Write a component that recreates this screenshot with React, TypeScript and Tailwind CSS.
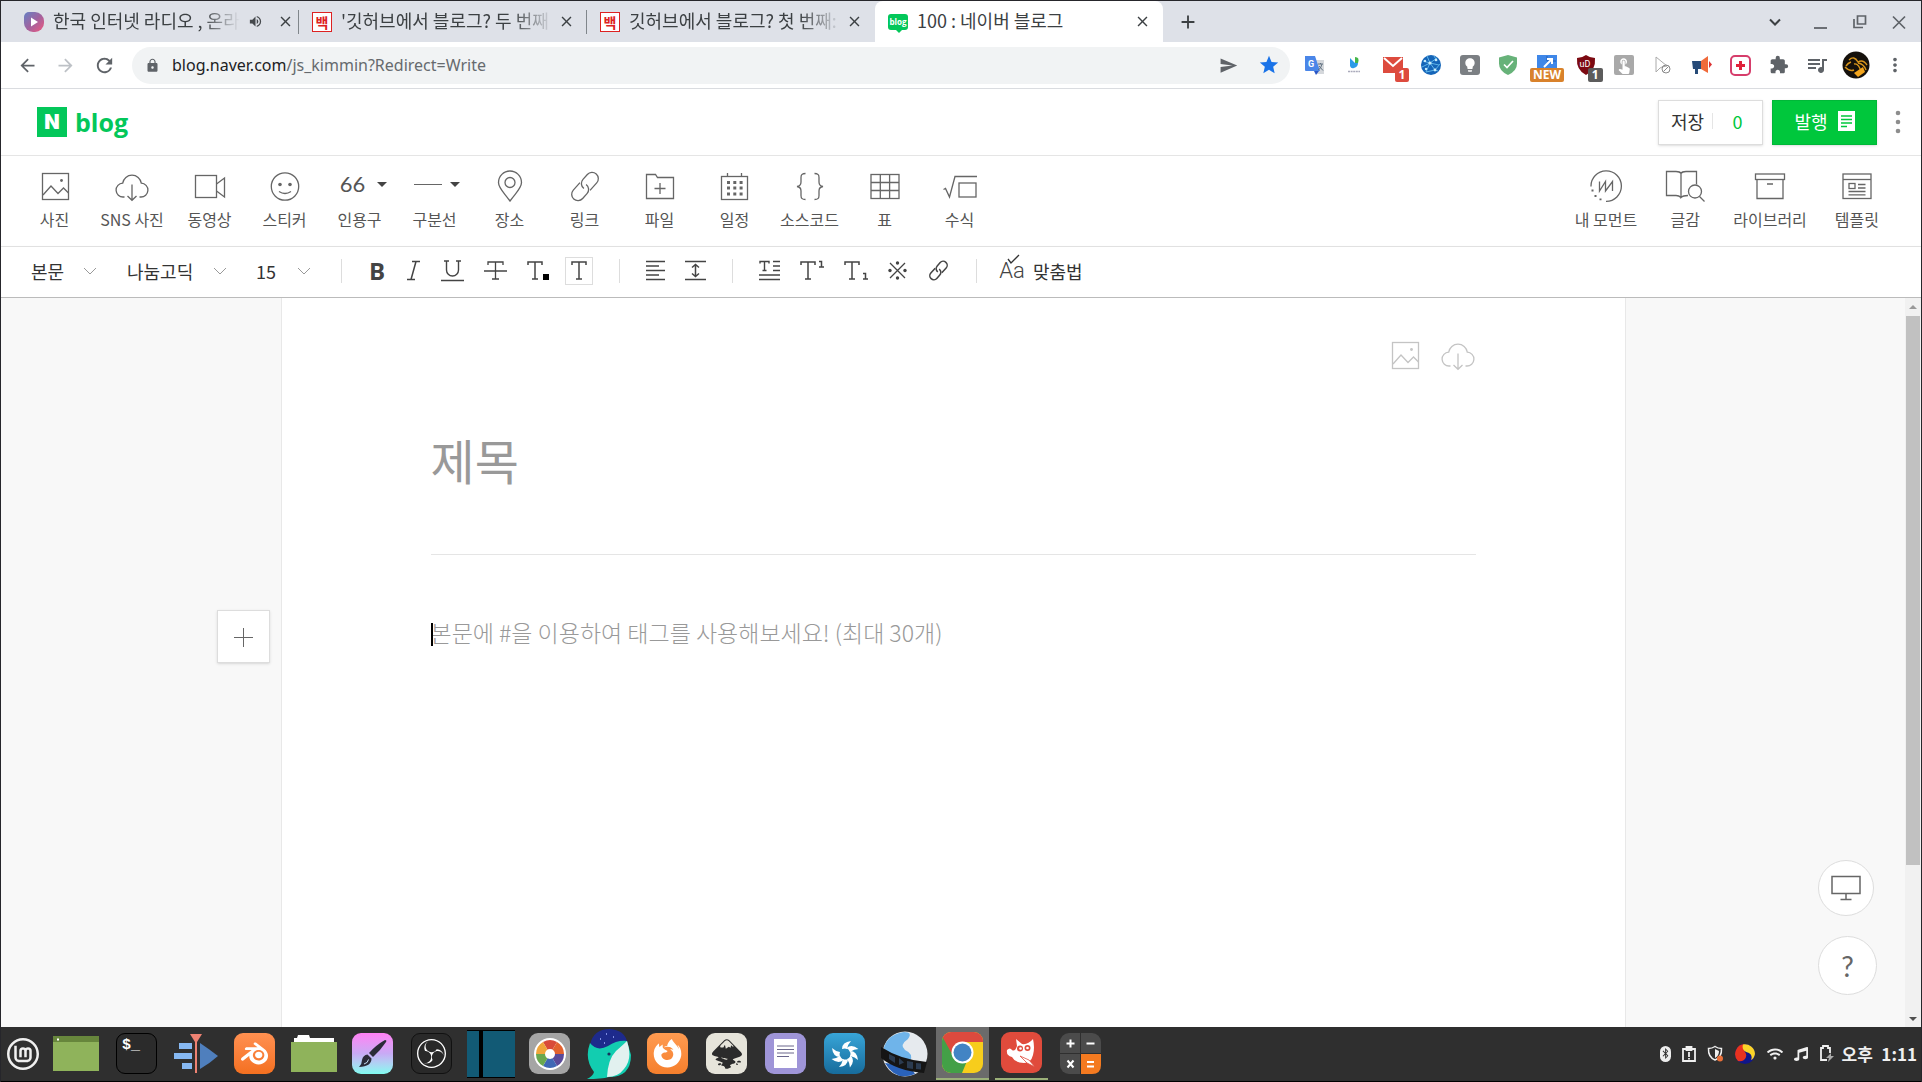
import type { ReactNode } from 'react'
import {
  MdArrowBack, MdArrowForward, MdRefresh, MdLock, MdSend, MdStar, MdExtension,
  MdQueueMusic, MdVolumeUp, MdMoreVert, MdClose, MdAdd, MdLightbulb, MdTouchApp,
} from 'react-icons/md'
import { SiLinuxmint, SiBlender, SiObsstudio, SiInkscape } from 'react-icons/si'
import { FaFirefoxBrowser, FaBluetoothB, FaWifi, FaMusic } from 'react-icons/fa'

// ─── Shared line icon wrapper (36×32 box for the big toolbar)
function Line({ children, w = 36, h = 32, className = '' }: { children: ReactNode; w?: number; h?: number; className?: string }) {
  return (
    <svg width={w} height={h} viewBox={`0 0 ${w} ${h}`} fill="none" stroke="currentColor" strokeWidth="1.3" className={`shrink-0 ${className}`} aria-hidden="true">
      {children}
    </svg>
  )
}

const PhotoIcon = () => (
  <Line>
    <rect x="5.5" y="3.5" width="26" height="26" />
    <path d="M6 25l8-9 7 7.5 5.5-5.5 5 5" />
    <circle cx="24.5" cy="10.5" r="1.4" fill="currentColor" stroke="none" />
  </Line>
)

const CloudIcon = () => (
  <Line>
    <path d="M10.5 27H9.3A6.9 6.9 0 0 1 8.7 13.2A9.4 9.4 0 0 1 27.3 13.2A6.9 6.9 0 0 1 26.7 27H25.5" />
    <path d="M18 14.5V30M13.5 26l4.5 4.3L22.5 26" />
  </Line>
)

const Caret = () => <span className="border-x-[5px] border-t-[5px] border-x-transparent border-t-[#444]" />

type Tool = { label: string; icon: ReactNode; wide?: boolean }

const TOOLS: Tool[] = [
  { label: '사진', icon: <PhotoIcon /> },
  { label: 'SNS 사진', icon: <CloudIcon />, wide: true },
  { label: '동영상', icon: <Line><rect x="3.5" y="5.5" width="21" height="22" /><path d="M24.5 14l8-6v19l-8-6" /></Line> },
  {
    label: '스티커',
    icon: (
      <Line>
        <circle cx="18" cy="16.5" r="13.7" />
        <circle cx="13" cy="14.5" r="1.8" fill="currentColor" stroke="none" />
        <circle cx="23" cy="14.5" r="1.8" fill="currentColor" stroke="none" />
        <path d="M12 21.5q6 4 12 0" />
      </Line>
    ),
  },
  { label: '인용구', icon: <span className="flex h-8 items-center gap-3 pb-1 pl-2"><span className="font-['Lato',sans-serif] text-[22px] leading-7 text-[#555]">66</span><Caret /></span> },
  { label: '구분선', icon: <span className="flex h-8 items-center gap-2 pb-1 pl-1"><span className="w-7 border-t border-[#666]" /><Caret /></span> },
  { label: '장소', icon: <Line><path d="M18 31C11 21.5 6.5 18 6.5 12.5a11.5 11.5 0 0 1 23 0C29.5 18 25 21.5 18 31z" /><circle cx="18" cy="12.5" r="5" /></Line> },
  {
    label: '링크',
    icon: (
      <Line>
        <g transform="rotate(-48 18 16.5)">
          <path d="M17.5 10.2H7.5a6.3 6.3 0 0 0 0 12.6h6.5a6.2 6.2 0 0 0 6.2-6.8" />
          <path d="M18.5 22.800H28.500a6.300 6.300 0 0 0 0-12.600h-6.500a6.200 6.200 0 0 0-6.200 6.800" />
        </g>
      </Line>
    ),
  },
  { label: '파일', icon: <Line><path d="M4.5 28.500v-24h9l2 3h16v21z" /><path d="M12.500 18.500h11M18 13v11" /></Line> },
  {
    label: '일정',
    icon: (
      <Line>
        <rect x="4.5" y="6.5" width="26" height="23" />
        <path d="M10.5 3v3.5M24.5 3v3.5" />
        <path d="M10 12.5h16M10 18h16M10 24h16" strokeWidth="3" strokeDasharray="3 3.300" />
      </Line>
    ),
  },
  {
    label: '소스코드',
    icon: (
      <Line>
        <path d="M13.5 3.500c-4 0-4.500 1.500-4.500 4v4.500q0 4-4 4.500q4 .5 4 4.500v4.500c0 2.500 .5 4 4.500 4" />
        <path d="M22.5 3.500c4 0 4.500 1.500 4.500 4v4.500q0 4 4 4.500q-4 .5-4 4.500v4.500c0 2.500-.5 4-4.500 4" />
      </Line>
    ),
  },
  { label: '표', icon: <Line><rect x="4" y="4.5" width="28" height="24" /><path d="M4 12.5h28M4 20.5h28M13.3 4.500v24M22.600 4.500v24" /></Line> },
  { label: '수식', icon: <Line><path d="M1.5 19.500l2-1 4 8.500 5.500-20.500h22" /><rect x="17" y="13" width="17" height="14" /></Line> },
]

const RIGHT_TOOLS: Tool[] = [
  {
    label: '내 모먼트',
    icon: (
      <Line>
        <path d="M3 16.5A15.2 15.2 0 1 1 18 31.3" />
        <path d="M11.5 11.500v9.500l6-9.500v9.500l7-9.500v9.500" />
        <path d="M3.5 20.500h2M6.500 26h2M11.500 29.300h2" strokeWidth="1.8" />
      </Line>
    ),
  },
  {
    label: '글감',
    icon: (
      <Line w={40}>
        <path d="M16 27.5q-2-2-5-2H1.500v-24H11q4 0 5 2q1-2 5-2h10.500v13M16 3.500v24q2-2 7-2" />
        <circle cx="30" cy="21.500" r="6.5" /><path d="M34.5 26.500l5 5" />
      </Line>
    ),
  },
  { label: '라이브러리', icon: <Line><rect x="3.5" y="4" width="29" height="5.5" /><path d="M5 9.500v19h26v-19M15 14h6" /></Line> },
  {
    label: '템플릿',
    icon: (
      <Line>
        <rect x="4" y="4" width="28" height="24.5" /><path d="M4 9.5h28" />
        <rect x="10" y="13.5" width="6" height="5" /><path d="M19 14.5h7.500M19 18h7.500M9.500 21.500h17M9.500 24.800h17" />
      </Line>
    ),
  },
]

// ─── Browser tabs
type TabData = { title: string; fav: 'radio' | 'baek' | 'blog'; sound?: boolean; active?: boolean }

const TABS: TabData[] = [
  { title: '한국 인터넷 라디오 , 온라', fav: 'radio', sound: true },
  { title: "'깃허브에서 블로그? 두 번째", fav: 'baek' },
  { title: '깃허브에서 블로그? 첫 번째:', fav: 'baek' },
  { title: '100 : 네이버 블로그', fav: 'blog', active: true },
]

function Favicon({ kind }: { kind: TabData['fav'] }) {
  if (kind === 'radio') {
    return (
      <span className="flex size-5 shrink-0 items-center justify-center rounded-[9px] rounded-tl-[5px] bg-linear-to-br from-[#5f7fc4] via-[#a0629f] to-[#f0527c]">
        <svg width="10" height="10" viewBox="0 0 10 10" fill="#fff"><path d="M2 .5l7 4.5-7 4.5z" /></svg>
      </span>
    )
  }
  if (kind === 'baek') {
    return <span className="flex size-5 shrink-0 items-center justify-center border border-[#d22] bg-white text-[14px] leading-4 font-bold text-[#d22]">백</span>
  }
  return (
    <span className="relative flex h-4 w-5 shrink-0 items-center justify-center rounded-[3px] bg-[#03c75a] font-['Open_Sans',sans-serif] text-[8px] leading-4 font-bold text-white">
      blog
      <span className="absolute top-4 left-2 border-x-[3px] border-t-[3px] border-x-transparent border-t-[#03c75a]" />
    </span>
  )
}

function Tab({ tab }: { tab: TabData }) {
  return (
    <div className={`flex h-[41px] w-72 items-center pr-3 pl-[13px] ${tab.active ? 'rounded-t-lg bg-white' : ''}`}>
      <Favicon kind={tab.fav} />
      <span className={`ml-[9px] flex-1 pb-1 text-[18px] leading-6 whitespace-nowrap text-[#3c4043] ${tab.active ? '' : 'mask-r-from-80% mask-r-to-100%'}`}>{tab.title}</span>
      {tab.sound && <MdVolumeUp size={15} className="mr-[10px] ml-2 shrink-0 text-[#45494d]" />}
      <button aria-label="탭 닫기" className="ml-1 shrink-0 text-[#3c4043]"><MdClose size={17} /></button>
    </div>
  )
}

function TabStrip() {
  return (
    <div className="flex h-[41px] items-center bg-[#dee1e8] pl-[10px]">
      {TABS.map((t, i) => (
        <div key={t.title} className={`h-full ${i < 2 ? 'bg-[linear-gradient(#80868b,#80868b)] bg-[length:1px_24px] bg-[position:right_9px] bg-no-repeat' : ''}`}>
          <Tab tab={t} />
        </div>
      ))}
      <button aria-label="새 탭" className="ml-[14px] text-[#3c4043]"><MdAdd size={22} /></button>
      <div className="ml-auto flex items-center gap-[23px] pr-[14px] text-[#5f6368]">
        <button aria-label="탭 검색" className="mr-2 text-[#3c4043]"><Line w={14} h={14}><path d="M2 4.5l5 5 5-5" strokeWidth="2" /></Line></button>
        <button aria-label="최소화"><Line w={16} h={16}><path d="M1 14h13" strokeWidth="1.8" /></Line></button>
        <button aria-label="이전 크기로"><Line w={16} h={16}><path d="M5.5 2h8v8h-8zM2 5v8.500h9" strokeWidth="1.7" /></Line></button>
        <button aria-label="닫기"><Line w={16} h={16}><path d="M2 2.5l12 12M14 2.500l-12 12" strokeWidth="1.7" /></Line></button>
      </div>
    </div>
  )
}

function Badge({ text, className }: { text: string; className: string }) {
  return <span className={`absolute rounded-[2px] px-1 font-['Open_Sans',sans-serif] text-[12px] leading-[14px] font-bold text-white ${className}`}>{text}</span>
}

const EXTENSIONS: [string, ReactNode][] = [
  ['번역', <svg width="20" height="20" viewBox="0 0 20 20"><path d="M8 5h11v14H11z" fill="#d5d8dc" /><path d="M0 1h10l5 15H1q-1 0-1-1z" fill="#4a86e8" /><path d="M9 16h5l-3 4z" fill="#2a56c6" /><text x="3" y="11.5" fontSize="9" fontWeight="700" fill="#fff" fontFamily="Roboto">G</text><path d="M13 9h5M15.5 8v1M17 9q-1 5-4 6M14 11l4 4.500" stroke="#607080" fill="none" /></svg>],
  ['망고보드', <svg width="16" height="18" viewBox="0 0 16 18"><path d="M4 2l5 5 3 0q0 4-4 5-3 1-4-2z" fill="#2c9be8" /><path d="M9 1q5 0 3 6H9z" fill="#44b649" /><path d="M2 15.5h12" stroke="#aab" strokeWidth="1.5" strokeDasharray="2 .6" /></svg>],
  ['메일', <span className="relative"><svg width="20" height="17" viewBox="0 0 20 17"><path d="M0 0h20v16H0z" fill="#dd4b3e" /><path d="M1 1l9 8 9-8" stroke="#fff" strokeWidth="2" fill="none" /></svg><Badge text="1" className="top-[11px] left-3 bg-[#dd4b3e]" /></span>],
  ['지구본', <svg width="20" height="20" viewBox="0 0 20 20"><circle cx="10" cy="10" r="10" fill="#1565b8" /><path d="M2 6l7 2 7-5M1 12l8-4 5 7 5-6M6 1l3 7-4 9M9 8l9 2M5 17l9-2 3 1M13 1l3 5" stroke="#5fb4e8" fill="none" /><g fill="#c8ecfb"><circle cx="9" cy="8" r="1.6" /><circle cx="14" cy="15" r="1.4" /><circle cx="5" cy="14" r="1.2" /><circle cx="15" cy="5" r="1.3" /><circle cx="4" cy="6" r="1.2" /></g></svg>],
  ['메모', <span className="flex size-5 items-center justify-center rounded-[3px] bg-[#7b7f83] text-white"><MdLightbulb size={16} /></span>],
  ['보호', <svg width="20" height="20" viewBox="0 0 20 20"><path d="M10 0l9 2.5v6q0 7.500-9 11.500q-9-4-9-11.500v-6z" fill="#67b279" /><path d="M6 9.500l3 3 6-6.500" stroke="#fff" strokeWidth="1.7" fill="none" /></svg>],
  ['새 창', <span className="relative flex w-[34px] justify-center"><svg width="20" height="20" viewBox="0 0 20 20"><path d="M0 0h20v14H0z" fill="#3f87e8" /><path d="M10 1v5h9" stroke="#225fb8" fill="none" /><path d="M7 12l8-8M10 4h5v5" stroke="#fff" strokeWidth="2" fill="none" /></svg><span className="absolute top-[13px] left-0 w-[34px] rounded-[2px] bg-[#d9822b] text-center font-['Open_Sans',sans-serif] text-[12px] leading-[14px] font-bold text-white">NEW</span></span>],
  ['광고 차단', <span className="relative"><svg width="20" height="20" viewBox="0 0 20 20"><path d="M10 0q4 3 9 3q1 12-9 17Q0 15 1 3q5 0 9-3z" fill="#7c0a12" /><text x="3.5" y="12" fontSize="9" fill="#fff" fontFamily="Roboto">uD</text></svg><Badge text="1" className="top-[13px] left-3 bg-[#5c5c5c]" /></span>],
  ['터치', <span className="flex size-5 items-center justify-center rounded-[2px] bg-[#a9a9a9] text-white"><MdTouchApp size={18} /></span>],
  ['커서', <svg width="20" height="20" viewBox="0 0 20 20" fill="none" stroke="#aaa"><path d="M3 2v15l4-4 2-1 5-1z" /><circle cx="13" cy="14" r="4" stroke="#888" /><path d="M10.5 16.500l5-5" stroke="#888" /></svg>],
  ['알림', <svg width="22" height="20" viewBox="0 0 22 20"><path d="M1 6h9v8H7v5H4v-5H2z" fill="#274b78" /><path d="M10 6l7-5v17l-7-4z" fill="#f06a3a" /><path d="M18 6v7l3-3.5z" fill="#d33" /></svg>],
  ['추가', <span className="flex size-[21px] items-center justify-center rounded-[5px] border-2 border-[#d63d6b] text-[#e0213a]"><svg width="11" height="11" viewBox="0 0 11 11"><path d="M4 1h3v3h3v3H7v3H4V7H1V4h3z" fill="currentColor" /></svg></span>],
  ['확장 프로그램', <MdExtension size={20} />],
  ['미디어', <MdQueueMusic size={24} />],
  ['프로필', <svg width="28" height="28" viewBox="0 0 28 28"><circle cx="14" cy="14" r="13.5" fill="#15110c" /><path d="M7 9q5-5 9 2 5-3 9 3M12 13q5-1 7 8M16 12q6 1 8 7M3 16q5 5 9 3M9 11q-3 1-5 4" stroke="#d9961c" strokeWidth="1.4" fill="none" /><path d="M12 22l9-6 2 5-7 5z" fill="#f3a51d" /></svg>],
  ['메뉴', <MdMoreVert size={22} />],
]

function AddressBar() {
  return (
    <div className="flex h-[47px] items-center border-b border-[#dadce0] bg-white pr-[7px] pl-4 text-[#5f6368]">
      <button aria-label="뒤로" className="mr-[17px]"><MdArrowBack size={21} /></button>
      <button aria-label="앞으로" className="mr-[17px] text-[#bdc1c6]"><MdArrowForward size={21} /></button>
      <button aria-label="새로고침" className="mr-4"><MdRefresh size={23} /></button>
      <div className="mr-[6px] flex h-[37px] flex-1 items-center rounded-full bg-[#f1f3f4] pr-[10px] pl-[13px]">
        <MdLock size={15} />
        <a href="#write" className="ml-3 font-['Noto_Sans',sans-serif] text-[16px] text-[#666a6e]">
          <span className="text-[#202124]">blog.naver.com</span>/js_kimmin?Redirect=Write
        </a>
        <button aria-label="보내기" className="ml-auto"><MdSend size={19} /></button>
        <button aria-label="즐겨찾기" className="ml-5 text-[#1a73e8]"><MdStar size={22} /></button>
      </div>
      <div className="grid w-[618px] grid-cols-16">
        {EXTENSIONS.map(([name, icon]) => (
          <button key={name} aria-label={name} className="flex items-center justify-center">{icon}</button>
        ))}
      </div>
    </div>
  )
}

// ─── Blog editor header
function BlogHeader() {
  return (
    <header className="flex h-[67px] items-center border-b border-[#e5e5e5] pr-[17px] pl-9">
      <a href="#home" className="flex items-center gap-2 text-[#03c75a]">
        <span className="flex size-[30px] items-center justify-center bg-[#03c75a] font-['Inter',sans-serif] text-[20px] leading-none font-black text-white">N</span>
        <span className="font-['Open_Sans',sans-serif] text-[25px] leading-8 font-bold">blog</span>
      </a>
      <div className="ml-auto flex items-center text-[18px]">
        <div className="flex h-[45px] w-[105px] items-center border border-[#ddd] pb-[2px] shadow-sm">
          <button className="pl-3 text-[#333]">저장</button>
          <button aria-label="임시저장 0건" className="ml-2 h-4 flex-1 border-l border-[#e5e5e5] leading-4 text-[#00c73c]">0</button>
        </div>
        <button className="ml-[9px] flex h-[45px] w-[105px] items-center justify-center gap-[10px] border border-[#00b838] bg-[#00c73c] pb-[2px] text-white shadow-sm">
          발행
          <svg width="17" height="20" viewBox="0 0 17 20"><path d="M0 0h17v20H0z" fill="#fff" /><path d="M3 5h11M3 8.5h11M3 12h11M3 15.500h6" stroke="#00c73c" strokeWidth="1.5" /></svg>
        </button>
        <button aria-label="더보기" className="ml-[15px] text-[#8d8d8d]">
          <svg width="12" height="24" viewBox="0 0 12 24" fill="currentColor"><circle cx="6" cy="3" r="2.3" /><circle cx="6" cy="12" r="2.3" /><circle cx="6" cy="21" r="2.3" /></svg>
        </button>
      </div>
    </header>
  )
}

function ToolButton({ tool, className }: { tool: Tool; className: string }) {
  return (
    <button className={`flex flex-col items-center gap-[7px] whitespace-nowrap text-[#666] ${className}`}>
      {tool.icon}
      <span className="text-[16px] leading-5 text-[#555]">{tool.label}</span>
    </button>
  )
}

function MainToolbar() {
  return (
    <div className="flex h-[91px] items-start border-b border-[#e5e5e5] pt-[14px] pr-[42px] pl-4">
      {TOOLS.map(t => <ToolButton key={t.label} tool={t} className={t.wide ? 'w-20' : 'w-[75px]'} />)}
      <div className="ml-auto flex gap-7">
        {RIGHT_TOOLS.map(t => <ToolButton key={t.label} tool={t} className="" />)}
      </div>
    </div>
  )
}

function Picker({ label, value, className }: { label: string; value: string; className: string }) {
  return (
    <label className={`relative flex items-center ${className}`}>
      <select aria-label={label} defaultValue={value} className="w-full appearance-none bg-transparent text-[18px] leading-6 text-[#333] outline-none">
        <option>{value}</option>
      </select>
      <Line w={14} h={10} className="pointer-events-none absolute right-0 text-[#999]"><path d="M1 2l6 6 6-6" strokeWidth="1" /></Line>
    </label>
  )
}

const Divider = () => <span className="mx-[26px] h-6 w-px bg-[#ddd]" />

// slab T reused by several text-style buttons
const SLAB_T = 'M1 6V3h14v3M8 3v17M5 20h6'

function FormatButton({ label, w, children }: { label: string; w: number; children: ReactNode }) {
  return <button aria-label={label} className="text-[#444]"><Line w={w} h={24}>{children}</Line></button>
}

function FormatToolbar() {
  return (
    <div className="flex h-[51px] items-center border-b border-[#bbb] pb-[2px] pl-[30px] shadow-sm">
      <Picker label="문단 서식" value="본문" className="w-[66px]" />
      <Picker label="글꼴" value="나눔고딕" className="ml-[30px] w-[100px]" />
      <Picker label="글자 크기" value="15" className="mr-1 ml-[29px] w-[55px]" />
      <Divider />
      <div className="flex items-center gap-5">
        <button aria-label="굵게" className="w-[18px] font-['Open_Sans',sans-serif] text-[24px] leading-6 font-bold text-[#444]">B</button>
        <FormatButton label="기울임" w={15}><path d="M6 2.5h8M1 20.500h8M10 2.500l-5 18" strokeWidth="1.5" /></FormatButton>
        <FormatButton label="밑줄" w={23}><path d="M3 2h5M15 2h5M5.5 2v9a6 6 0 0 0 12 0V2M0 21.500h23" strokeWidth="1.4" /></FormatButton>
        <FormatButton label="취소선" w={23}><path d="M4 6V3h15v3M11.5 3v17M8 20h7M0 12h23" /></FormatButton>
        <FormatButton label="글자색" w={22}><path d={SLAB_T} strokeWidth="1.5" /><path d="M16 15h6v6h-6z" fill="#000" stroke="none" /></FormatButton>
        <button aria-label="글자 배경색" className="-ml-1 flex size-7 items-center justify-center border border-[#ddd] text-[#444]">
          <Line w={16} h={24}><path d={SLAB_T} strokeWidth="1.5" /></Line>
        </button>
      </div>
      <Divider />
      <div className="flex items-center gap-5">
        <FormatButton label="정렬" w={19}><path d="M0 2.5h19M0 7h13M0 11.500h19M0 16h13M0 20.500h19" strokeWidth="1.5" /></FormatButton>
        <FormatButton label="줄 간격" w={21}><path d="M0 2.5h21M0 20.500h21M10.500 5.500v12M7 8.500l3.500-3 3.500 3M7 14.500l3.500 3 3.500-3" strokeWidth="1.5" /></FormatButton>
      </div>
      <Divider />
      <div className="flex items-center gap-5">
        <FormatButton label="문단 스타일" w={21}><path d="M1 4.5V2.500h9v2M5.500 2.500v9M3.500 11.500h4M14 2.500h7M14 7h7M14 11.500h7M0 16h21M0 20.500h21" strokeWidth="1.4" /></FormatButton>
        <FormatButton label="위 첨자" w={24}><path d={SLAB_T} strokeWidth="1.5" /><path d="M19 2.5h2.500V8M19 8h5" strokeWidth="1.5" /></FormatButton>
        <FormatButton label="아래 첨자" w={24}><path d={SLAB_T} strokeWidth="1.5" /><path d="M19 14.5h2.500V20M19 20h5" strokeWidth="1.5" /></FormatButton>
        <FormatButton label="특수문자" w={19}><path d="M2 4l15 15M17 4L2 19" /><g fill="currentColor" stroke="none"><circle cx="9.5" cy="4" r="1.7" /><circle cx="9.5" cy="19" r="1.7" /><circle cx="2" cy="11.5" r="1.7" /><circle cx="17" cy="11.5" r="1.7" /></g></FormatButton>
        <FormatButton label="링크" w={23}>
          <g transform="rotate(-48 11.5 11.5)" strokeWidth="1.5">
            <path d="M11 7.5H4.500a4 4 0 0 0 0 8h4.500a4 4 0 0 0 4-4.500" />
            <path d="M12 15.500H18.500a4 4 0 0 0 0-8h-4.500a4 4 0 0 0-4 4.500" />
          </g>
        </FormatButton>
      </div>
      <Divider />
      <button className="relative -ml-1 flex items-center gap-2 text-[18px] text-[#333]">
        <span className="w-[26px] font-['Roboto',sans-serif] text-[22px] leading-6 font-light text-[#444]">Aa</span>
        <Line w={14} h={10} className="absolute top-[-4px] left-2"><path d="M1 5l3 4 8-8" /></Line>
        맞춤법
      </button>
    </div>
  )
}

// ─── Document area
function Editor() {
  return (
    <main className="flex min-h-0 flex-1 overflow-hidden bg-[#f8f8f8]">
      <div className="flex min-w-16 flex-1 items-start justify-end">
        <button aria-label="추가" className="mt-[312px] mr-[11px] flex size-[53px] items-center justify-center border border-[#ddd] bg-white text-[#666] shadow-sm">
          <Line w={20} h={20}><path d="M10.5 1v19M1 10.500h19" strokeWidth="1" /></Line>
        </button>
      </div>
      <div className="w-[1345px] border-x border-[#e8e8e8] bg-white px-[149px] pt-[41px]">
        <div className="flex justify-end gap-[17px] text-[#c4c4c4]">
          <button aria-label="배경 사진"><PhotoIcon /></button>
          <button aria-label="SNS 배경 사진"><CloudIcon /></button>
        </div>
        <input aria-label="제목" placeholder="제목" className="mt-12 block h-20 w-full text-[48px] outline-none placeholder:text-[#999]" />
        <hr className="mt-[55px] border-[#e5e5e5]" />
        <div className="relative mt-[59px]">
          <span className="absolute top-[9px] left-0 h-[23px] w-[2px] bg-black" />
          <textarea aria-label="본문" rows={3} placeholder="본문에 #을 이용하여 태그를 사용해보세요! (최대 30개)" className="block w-full resize-none text-[23px] leading-9 font-light outline-none placeholder:text-[#999]" />
        </div>
      </div>
      <div className="flex min-w-24 flex-1 flex-col items-end justify-end gap-5">
        <button aria-label="기기 화면 보기" className="mr-[31px] flex size-14 items-center justify-center rounded-full border border-[#ddd] bg-white text-[#666]">
          <Line w={30} h={26}><path d="M1 1.5h28v17H1zM15 18.500v6M9.500 24.500h11" strokeWidth="1.5" /></Line>
        </button>
        <button aria-label="도움말" className="mr-7 mb-8 flex size-[59px] items-center justify-center rounded-full border border-[#ddd] bg-white font-['Lato',sans-serif] text-[28px] text-[#666]">?</button>
      </div>
      {/* scrollbar */}
      <div className="flex w-4 flex-col items-center bg-[#f1f1f1]">
        <span className="my-[7px] border-x-4 border-b-4 border-x-transparent border-b-[#999]" />
        <span className="h-[549px] w-[14px] bg-[#c1c1c1]" />
        <span className="mt-auto mb-[6px] border-x-4 border-t-4 border-x-transparent border-t-[#505050]" />
      </div>
    </main>
  )
}

// ─── Desktop panel
const TILE = 'flex size-[41px] items-center justify-center rounded-[9px]'

const APPS: { name: string; icon: ReactNode; state?: 'active' | 'open' }[] = [
  { name: '바탕화면', icon: <svg width="46" height="35" viewBox="0 0 46 35"><path d="M0 0h46v35H0z" fill="#8fb35b" /><path d="M0 0h46v6H0z" fill="#67863c" /><path d="M4 2.5h2v2H4z" fill="#fff" /></svg> },
  { name: '터미널', icon: <span className="flex size-[41px] items-start rounded-[9px] border border-black bg-[#2b2b2b] pt-1 pl-[5px] font-['Liberation_Mono',monospace] text-[15px] leading-4 font-bold text-white">$_</span> },
  { name: '영상 편집', icon: <svg width="44" height="40" viewBox="0 0 44 40"><path d="M5 9h13v6H5zM0 19h18v6H0zM8 29h10v6H8z" fill="#86b8f2" /><path d="M26 9q9 6 18 13-9 8-18 13z" fill="#4f7fbd" /><path d="M16 0h12l-5 8v31h-2V8z" fill="#ef8272" /></svg> },
  { name: 'Blender', icon: <span className={`${TILE} bg-linear-to-b from-[#ff9050] to-[#f4701f] text-white`}><SiBlender size={27} /></span> },
  { name: '파일', icon: <svg width="46" height="37" viewBox="0 0 46 37"><path d="M3 7V3h3l1-3h11l1 3h24v6H3z" fill="#fff" /><path d="M0 7h46v30H0z" fill="#8fb35b" /></svg> },
  {
    name: 'Krita',
    icon: (
      <span className={`${TILE} bg-linear-to-b from-[#ff80f4] via-[#c8aaf5] to-[#7ffbf0]`}>
        <svg width="29" height="29" viewBox="0 0 29 29" fill="#2b2b38"><path d="M27 1q2 0 1 2-6 9-13 15l-4-4Q18 6 27 1z" /><path d="M9.500 15.500l4 4q0 8-12.500 8.500 3-3 3-7 1-5 5.500-5.500z" /><path d="M6 25q4-1 4.500-4.500" stroke="#c8e0f5" fill="none" /></svg>
      </span>
    ),
  },
  { name: 'OBS', icon: <span className={`${TILE} border border-[#111] bg-[#292929] text-white`}><SiObsstudio size={29} /></span> },
  { name: '창 배치', icon: <span className="flex h-12 w-12 gap-1 border-y border-black bg-black"><span className="w-3 bg-[#125a75]" /><span className="flex-1 bg-[#125a75]" /></span> },
  {
    name: '색상',
    icon: (
      <span className={`${TILE} bg-[#a5a5a5]`}>
        <svg width="32" height="32" viewBox="0 0 32 32">
          <circle cx="16" cy="16" r="16" fill="#fff" />
          <path d="M16 16L9 3.900A14 14 0 0 1 23 3.900z" fill="#d94b3a" /><path d="M16 16L23 3.900A14 14 0 0 1 30 16z" fill="#e2622f" />
          <path d="M16 16h14A14 14 0 0 1 23 28.100z" fill="#5a4a9a" /><path d="M16 16l7 12.100A14 14 0 0 1 9 28.100z" fill="#3f68b5" />
          <path d="M16 16L9 28.100A14 14 0 0 1 2 16z" fill="#6aa84f" /><path d="M16 16H2A14 14 0 0 1 9 3.900z" fill="#f0a53a" />
          <circle cx="16" cy="16" r="5" fill="#fff" />
        </svg>
      </span>
    ),
  },
  { name: 'Whale', icon: <svg width="46" height="50" viewBox="0 0 46 50"><path d="M4 16Q7 0 24 0q14 1 17 12Q24 14 14 22z" fill="#1d2a8c" /><path d="M4 14q7 9 18 3 9-6 19-5l4 14q0 22-22 22-8 2-22 2 6-3 7-7Q-2 30 4 14z" fill="#12cdb0" /><path d="M41 12q6 18-3 28-6 8-17 8 1-18 9-26 8-7 11-10z" fill="#e2f1ef" /><circle cx="23" cy="25" r="1.6" fill="#18325c" /><path d="M14 10h1M20 5h1M27 8h1M18 14h1" stroke="#a0b0ff" strokeWidth="1.5" /></svg> },
  { name: 'Firefox', icon: <span className={`${TILE} bg-linear-to-b from-[#ff9b50] to-[#f57f2c] text-white`}><FaFirefoxBrowser size={29} /></span> },
  { name: 'Inkscape', icon: <span className={`${TILE} bg-[#e6e4da] text-[#2b2b2b]`}><SiInkscape size={30} /></span> },
  { name: '문서', icon: <span className={`${TILE} bg-[#9f95d8]`}><svg width="23" height="29" viewBox="0 0 23 29"><path d="M0 0h23v29H0z" fill="#fff" /><path d="M3 7h17M3 10.5h17M3 14h17M3 17.500h12" stroke="#6a668c" /></svg></span> },
  {
    name: 'Shutter',
    icon: (
      <span className={`${TILE} bg-linear-to-b from-[#38a5d8] to-[#176c9c]`}>
        <svg width="30" height="30" viewBox="0 0 30 30" fill="#fff">
          {[0, 45, 90, 135, 180, 225, 270].map(a => <path key={a} d="M12 10Q12 3 21 2q-3 3-4 8-2-1-5 0z" transform={`rotate(${a} 15 15)`} />)}
        </svg>
      </span>
    ),
  },
  {
    name: 'OpenShot',
    icon: (
      <svg width="48" height="48" viewBox="0 0 48 48">
        <circle cx="25" cy="24" r="22.5" fill="#e6eaee" />
        <path d="M3 24Q4 5 24 2q9 0 4 7-9 6-3 11 9 4 5 11L3 28z" fill="#6fb4ea" />
        <path d="M5 33l25 3 5 8q-19 8-30-11z" fill="#2a62ba" />
        <path d="M1 17q20 13 46 15l-3 11Q17 41 1 28z" fill="#151515" />
        <path d="M9 24l6 3v6l-6-4zM19 28v7l5-2.500zM27 31l6 1v7l-6-1zM36 33l5 .5v6l-5-.5z" fill="#2b3b50" />
      </svg>
    ),
  },
  {
    name: 'Chrome',
    state: 'active',
    icon: (
      <span className={`${TILE} overflow-hidden`}>
        <svg width="41" height="41" viewBox="0 0 41 41">
          <path d="M0 0h41v41H0z" fill="#f7cd1c" /><path d="M0 0h41v10H20L10 24 0 5z" fill="#dc4a3e" /><path d="M0 4l11 20 14 5-5 12H0z" fill="#43a047" />
          <circle cx="20.5" cy="20.5" r="11" fill="#fff" /><circle cx="20.5" cy="20.5" r="9" fill="#4284c4" />
        </svg>
      </span>
    ),
  },
  {
    name: 'GIMP',
    state: 'open',
    icon: (
      <span className={`${TILE} bg-[#e04b3c]`}>
        <svg width="31" height="31" viewBox="0 0 31 31">
          <path d="M11 9l-1-7 6 5q6 1 11-5 2 9 0 16-2 8-9 8-9 0-12-6Q0 19 1 13q3-3 5 0 3 2 5-4z" fill="#fff" />
          <circle cx="14" cy="11.5" r="3" fill="#e04b3c" /><circle cx="21.5" cy="11" r="3" fill="#e04b3c" />
          <circle cx="14.5" cy="11.5" r="1.3" fill="#fff" /><circle cx="21.5" cy="11" r="1.3" fill="#fff" />
          <path d="M14 19l9 4 6 7-8-4z" fill="#fff" stroke="#e04b3c" strokeWidth=".8" />
        </svg>
      </span>
    ),
  },
  {
    name: '계산기',
    icon: (
      <svg width="41" height="41" viewBox="0 0 41 41">
        <rect width="41" height="41" rx="9" fill="#4b4b4b" /><path d="M21 21h20v11q0 9-9 9H21z" fill="#f47a20" />
        <path d="M0 20.5h41M20.500 0v41" stroke="#2f2f2f" />
        <path d="M6.5 10.500h8M10.500 6.500v8M26.500 10.500h8M7.500 27.500l6 7M13.500 27.500l-6 7M27 29h7M27 33.500h7" stroke="#fff" strokeWidth="2" />
      </svg>
    ),
  },
]

function Panel() {
  return (
    <footer className="flex h-[55px] shrink-0 items-center border-b border-black bg-[#2f2f2f] pb-px text-[#f0f0f0]">
      <button aria-label="메뉴" className="flex w-[43px] items-center justify-center"><SiLinuxmint size={32} /></button>
      {APPS.map((a, i) => (
        <button key={a.name} aria-label={a.name} className={`flex h-full justify-center ${i === 0 ? 'w-[63px]' : 'w-[59px]'}`}>
          <span className={`flex h-full w-[53px] items-center justify-center ${a.state ? 'border-b-2 border-[#9bb078]' : ''} ${a.state === 'active' ? 'bg-[#6b6b6b]' : ''}`}>{a.icon}</span>
        </button>
      ))}
      <div className="ml-auto flex items-center gap-[11px] pr-1">
        <span className="flex h-4 w-[11px] items-center justify-center rounded-full bg-[#eee] text-[#2f2f2f]"><FaBluetoothB size={11} /></span>
        <Line w={14} h={16}><path d="M1 3h12v12H1zM4.5 1h5v3h-5zM7 6v5M7 12v1.500" strokeWidth="1.8" /></Line>
        <Line w={16} h={17}><path d="M8 1.5q3 2 6.500 2Q15 12 8 15 1 12 1.500 3.500q3.500 0 6.500-2z" strokeWidth="1.5" /><path d="M8 4v9q4-2 4-7z" fill="currentColor" stroke="none" /><circle cx="13" cy="13.5" r="3" fill="#e9703a" stroke="none" /></Line>
        <svg width="22" height="22" viewBox="0 0 22 22"><circle cx="11" cy="11" r="10" fill="#10168a" /><path d="M4 18A10 10 0 0 1 11 1Q8 5 11 9t-1 8q-3 2-6 1z" fill="#e8321f" /><path d="M9 1.5A10 10 0 0 1 21 11q-1 5-4 6 2-5-2-7-8-2-6-8.500z" fill="#fbd428" /></svg>
        <FaWifi size={16} />
        <FaMusic size={14} />
        <Line w={16} h={17}><path d="M8 15H2V3h2V1h5v2h2v5" strokeWidth="1.8" /><path d="M12 8l-5 5h3l-1 4 6-6h-3z" fill="#aaa" stroke="none" /></Line>
        <span className="-ml-1 text-[17px] leading-6 font-bold whitespace-nowrap">오후&ensp;1:11</span>
      </div>
    </footer>
  )
}

export default function App() {
  return (
    <div className="flex h-screen flex-col overflow-hidden border-x border-t border-[#26262b] bg-white font-['Noto_Sans_CJK_KR',sans-serif]">
      <TabStrip />
      <AddressBar />
      <BlogHeader />
      <MainToolbar />
      <FormatToolbar />
      <Editor />
      <Panel />
    </div>
  )
}
